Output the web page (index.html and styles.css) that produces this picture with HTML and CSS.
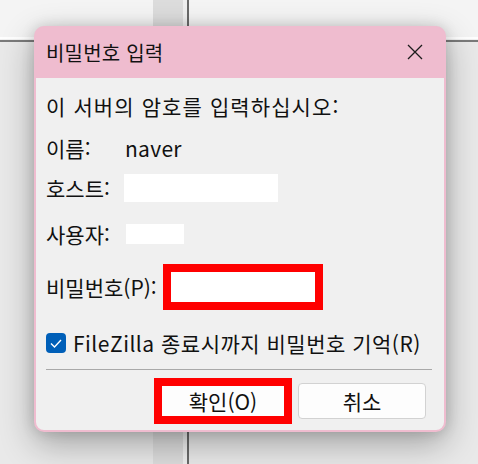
FILE: index.html
```html
<!DOCTYPE html>
<html lang="ko">
<head>
<meta charset="utf-8">
<title>비밀번호 입력</title>
<link rel="stylesheet" href="styles.css">
</head>
<body>
<div class="dialog">
  <div class="titlebar">
    <span class="title">비밀번호 입력</span>
    <svg class="close" width="16" height="16" viewBox="0 0 16 16"><path d="M1 1 L15 15 M15 1 L1 15" stroke="#1c1c1c" stroke-width="1.3" fill="none"/></svg>
  </div>
  <div class="content">
    <div class="row intro">이 서버의 암호를 입력하십시오:</div>
    <div class="row name"><span class="label label-name">이름:</span><span class="value">naver</span></div>
    <div class="row host"><span class="label label-host">호스트:</span><span class="field host-field"></span></div>
    <div class="row user"><span class="label label-user">사용자:</span><span class="field user-field"></span></div>
    <div class="row pass"><span class="label label-pass">비밀번호(P):</span><span class="field pass-field"></span></div>
    <div class="row remember">
      <span class="checkbox"><svg width="20" height="20" viewBox="0 0 20 20"><path d="M5 10.5 L8.5 14 L15 7" stroke="#ffffff" stroke-width="1.4" fill="none"/></svg></span>
      <span class="remember-text">FileZilla 종료시까지 비밀번호 기억(R)</span>
    </div>
    <div class="separator"></div>
    <div class="buttons">
      <button class="btn ok">확인(O)</button>
      <button class="btn cancel">취소</button>
    </div>
  </div>
</div>
</body>
</html>
```
FILE: styles.css
```css
html, body {
  margin: 0;
}
body {
  width: 478px;
  height: 464px;
  overflow: hidden;
  box-sizing: border-box;
  padding: 26px 0 0 34px;
  font-family: "Noto Sans CJK KR", "Noto Sans", sans-serif;
  color: #111111;
  background-color: #ececec;
  background-image:
    linear-gradient(to right, transparent 153px, #dcdcdc 153px, #dcdcdc 183px, #efefef 183px, #efefef 187px, #6a6a6a 187px, #6a6a6a 189px, transparent 189px),
    linear-gradient(to bottom, #f4f4f4 0, #f4f4f4 37px, #ffffff 37px, #ffffff 39px, #f0f0f0 39px, #f0f0f0 40px, #7a7a7a 40px, #7a7a7a 42px, #e9e9e9 42px, #e9e9e9 100%);
}
.dialog {
  width: 412px;
  height: 406px;
  box-sizing: border-box;
  border-radius: 10px;
  background: #efbccf;
  display: flex;
  flex-direction: column;
  box-shadow: 0 12px 34px rgba(0, 0, 0, 0.30), 0 0 14px rgba(0, 0, 0, 0.14);
}
.titlebar {
  height: 52px;
  flex: none;
  display: flex;
  align-items: center;
  justify-content: space-between;
  padding: 0 23px 0 12px;
}
.title {
  font-size: 20px;
  letter-spacing: 0.2px;
}
.close {
  display: block;
}
.content {
  flex: 1;
  margin: 0 2px 2px;
  background: #f0f0f0;
  border-radius: 0 0 8px 8px;
  padding: 10px 12px 6px 10px;
  display: flex;
  flex-direction: column;
  font-size: 21px;
}
.row {
  display: flex;
  align-items: center;
  height: 36px;
  white-space: nowrap;
}
.intro { letter-spacing: 1.1px; }
.name { margin-top: 6px; }
.host { margin-top: 4px; }
.user { margin-top: 10px; }
.pass { margin-top: 12px; height: 46px; }
.remember { margin-top: 16px; height: 34px; }
.label { flex: none; }
.label-name { width: 79px; }
.label-host { width: 78px; }
.label-user { width: 80px; }
.label-pass { width: 117px; }
.value { letter-spacing: 0.3px; }
.field {
  display: block;
  background: #ffffff;
  box-sizing: border-box;
}
.host-field { width: 154px; height: 28px; }
.user-field { width: 58px; height: 20px; }
.pass-field { width: 160px; height: 46px; border: 8px solid #ff0000; }
.checkbox {
  width: 20px;
  height: 20px;
  border-radius: 4px;
  background: #005fb8;
  margin-right: 7px;
  flex: none;
}
.checkbox svg { display: block; }
.remember-text { letter-spacing: 0.5px; }
.separator {
  height: 1px;
  background: #a9a9a9;
  margin-top: 9px;
}
.buttons {
  margin-top: 8px;
  height: 46px;
  display: flex;
  justify-content: flex-end;
  align-items: center;
  gap: 6px;
  padding-right: 6px;
}
.btn {
  font-family: inherit;
  font-size: 21px;
  color: #111111;
  background: #fdfdfd;
  box-sizing: border-box;
  padding: 0;
  margin: 0;
}
.ok {
  width: 138px;
  height: 46px;
  border: 8px solid #ff0000;
  border-radius: 0;
}
.cancel {
  width: 128px;
  height: 36px;
  border: 1px solid #d2d2d2;
  border-radius: 4px;
}
```
